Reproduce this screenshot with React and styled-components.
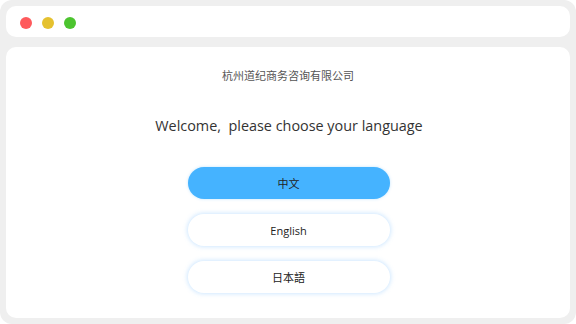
import React from 'react';
import styled, { createGlobalStyle } from 'styled-components';

const GlobalStyle = createGlobalStyle`
  html, body {
    margin: 0;
    padding: 0;
    background: #ffffff;
  }
  body {
    font-family: "Open Sans", "Noto Sans CJK SC", sans-serif;
  }
`;

const Frame = styled.div`
  width: 576px;
  height: 324px;
  box-sizing: border-box;
  padding: 6px;
  background: #efefef;
  border-radius: 12px;
  display: flex;
  flex-direction: column;
  gap: 10px;
`;

const TitleBar = styled.div`
  height: 31px;
  background: #ffffff;
  border-radius: 10px;
  display: flex;
  align-items: center;
  gap: 10px;
  padding: 2px 0 0 14px;
  box-sizing: border-box;
`;

const Dot = styled.span`
  width: 12px;
  height: 12px;
  border-radius: 50%;
  background: ${(p) => p.color};
`;

const Panel = styled.div`
  flex: 1;
  background: #ffffff;
  border-radius: 10px;
  display: flex;
  flex-direction: column;
  align-items: center;
  padding-top: 20px;
`;

const Company = styled.div`
  font-size: 11px;
  line-height: 16px;
  color: #555555;
  font-family: "Noto Sans CJK SC", sans-serif;
`;

const Welcome = styled.div`
  margin-top: 33px;
  margin-left: 2px;
  font-size: 14.4px;
  line-height: 20px;
  color: #333333;
  white-space: pre;
`;

const Choices = styled.div`
  margin-top: 31px;
  margin-left: 1px;
  display: flex;
  flex-direction: column;
  gap: 15px;
`;

const LangButton = styled.button`
  width: 202px;
  height: 32px;
  border: none;
  border-radius: 16px;
  font-family: "Open Sans", "Noto Sans CJK SC", sans-serif;
  font-size: 11px;
  color: #222222;
  cursor: pointer;
  background: ${(p) => (p.active ? '#45b3ff' : '#ffffff')};
  box-shadow: ${(p) =>
    p.active ? '0 0 3px rgba(69, 179, 255, 0.35)' : '0 0 4px 1px rgba(120, 190, 255, 0.35)'};
`;

const languages = [
  { label: '中文', active: true },
  { label: 'English' },
  { label: '日本語' },
];

const App = () => (
  <>
    <GlobalStyle />
    <Frame>
      <TitleBar>
        <Dot color="#fe5a5c" />
        <Dot color="#e5c12f" />
        <Dot color="#4cc42f" />
      </TitleBar>
      <Panel>
        <Company>杭州道纪商务咨询有限公司</Company>
        <Welcome>Welcome,  please choose your language</Welcome>
        <Choices>
          {languages.map((lang) => (
            <LangButton key={lang.label} active={lang.active}>
              {lang.label}
            </LangButton>
          ))}
        </Choices>
      </Panel>
    </Frame>
  </>
);

export default App;
